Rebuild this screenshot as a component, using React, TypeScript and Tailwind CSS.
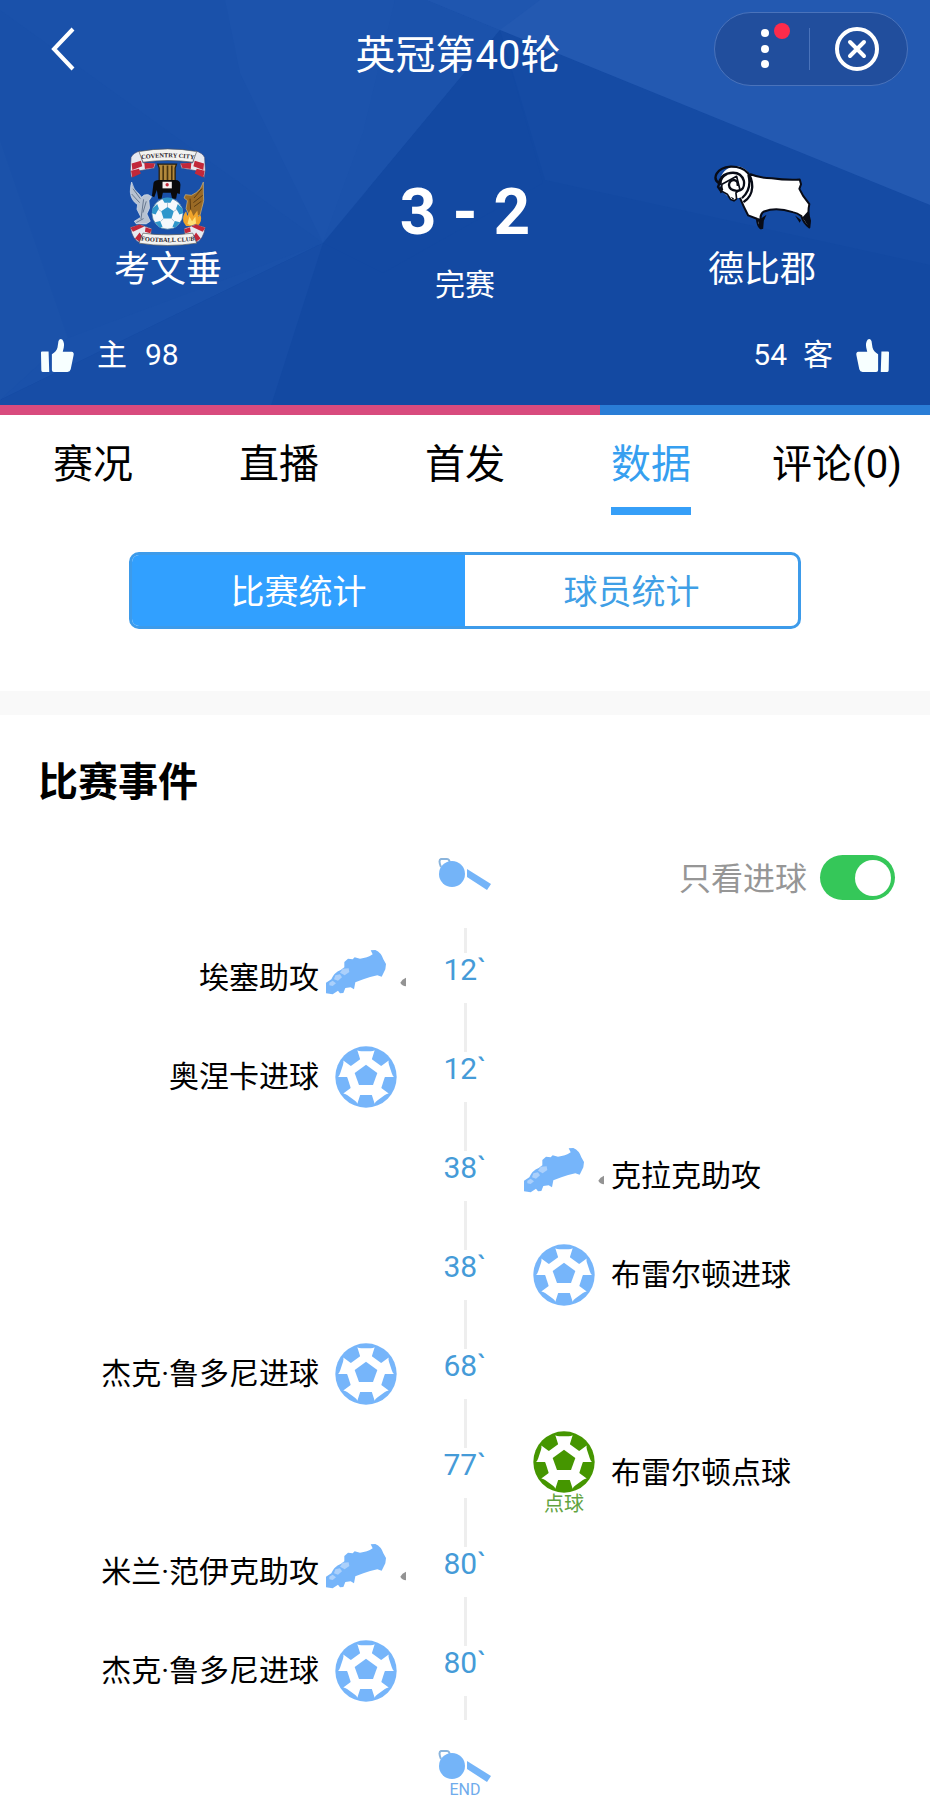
import { useState } from "react";
import type { ReactNode } from "react";

/* ================= TYPES ================= */

type EventKind = "assist" | "goal" | "penalty";

interface MatchEvent {
  minute: number;
  side: "home" | "away";
  kind: EventKind;
  text: string;
}

/* ================= DATA ================= */

const TABS = ["赛况", "直播", "首发", "数据", "评论(0)"];
const STATS = ["比赛统计", "球员统计"];
const LIKES = { home: 98, away: 54 };

const EVENTS: MatchEvent[] = [
  { minute: 12, side: "home", kind: "assist", text: "埃塞助攻" },
  { minute: 12, side: "home", kind: "goal", text: "奥涅卡进球" },
  { minute: 38, side: "away", kind: "assist", text: "克拉克助攻" },
  { minute: 38, side: "away", kind: "goal", text: "布雷尔顿进球" },
  { minute: 68, side: "home", kind: "goal", text: "杰克·鲁多尼进球" },
  { minute: 77, side: "away", kind: "penalty", text: "布雷尔顿点球" },
  { minute: 80, side: "home", kind: "assist", text: "米兰·范伊克助攻" },
  { minute: 80, side: "home", kind: "goal", text: "杰克·鲁多尼进球" },
];

/* ================= MAIN COMPONENT ================= */

export default function App() {
  const [tab, setTab] = useState("数据");
  const [stat, setStat] = useState("比赛统计");
  const [goalsOnly, setGoalsOnly] = useState(true);

  const homeShare = (LIKES.home / (LIKES.home + LIKES.away)) * 100;

  return (
    <div className="min-h-screen bg-white font-[Roboto,'Noto_Sans_CJK_SC',sans-serif] text-black">
      {/* HEADER */}
      <header className="relative isolate overflow-hidden bg-[#1349a2] text-white">
        <HeaderBackdrop />

        <div className="grid grid-cols-[1fr_auto_1fr] pt-3 pr-[14px]">
          <button type="button" aria-label="返回" className="ml-12 flex h-[74px] w-10 items-center">
            <svg viewBox="0 0 30 46" className="h-[46px] w-[30px]" fill="none" stroke="currentColor" strokeWidth="4">
              <path d="M25 3 6 23l19 20" />
            </svg>
          </button>
          <h1 className="pt-[14px] text-[40px] leading-[60px]">英冠第40轮</h1>
          <div className="mr-2 flex h-[74px] w-[194px] items-center justify-self-end rounded-full border border-[#4a73bb] bg-[#214e9d]">
            <button type="button" aria-label="更多" className="h-full w-[94px]">
              <svg viewBox="0 0 94 72" className="h-[72px] w-full" fill="currentColor">
                <circle cx="50" cy="20" r="4" />
                <circle cx="50" cy="36" r="4" />
                <circle cx="50" cy="51" r="4" />
                <circle cx="67" cy="18" r="8" fill="#fd2b4b" />
              </svg>
            </button>
            <span className="h-[42px] w-px bg-[#4a73bb]" />
            <button type="button" aria-label="关闭" className="flex h-full w-[94px] items-center justify-center">
              <svg viewBox="0 0 46 46" className="size-[46px]" fill="none" stroke="currentColor" strokeWidth="4">
                <circle cx="23" cy="23" r="20" />
                <path d="m16 16 14 14M30 16 16 30" strokeLinecap="round" />
              </svg>
            </button>
          </div>
        </div>

        <div className="mt-[61px] grid grid-cols-[13fr_10fr_13fr] text-center">
          <Team name="考文垂">
            <CoventryLogo />
          </Team>
          <div>
            <p className="pt-[34px] text-[64px] leading-[64px] font-bold">3 - 2</p>
            <p className="pt-5 text-[30px] leading-[40px]">完赛</p>
          </div>
          <Team name="德比郡">
            <DerbyLogo />
          </Team>
        </div>

        <div className="mt-[30px] mb-[30px] flex h-10 items-center justify-between px-10 text-[30px] leading-10">
          <button type="button" className="flex items-center">
            <Thumb />
            <span className="ml-[22px]">主</span>
            <span className="ml-[18px]">{LIKES.home}</span>
          </button>
          <button type="button" className="flex items-center">
            <span className="mr-[16px]">{LIKES.away}</span>
            <span className="mr-[22px]">客</span>
            <Thumb flip />
          </button>
        </div>

        <div className="flex h-[10px] bg-[#2a7dd6]">
          <div className="bg-[#d84b7e]" style={{ width: `${homeShare}%` }} />
        </div>
      </header>

      {/* TABS */}
      <nav className="grid grid-cols-5">
        {TABS.map((name) => (
          <button
            key={name}
            type="button"
            onClick={() => setTab(name)}
            className="flex justify-center pt-5 text-[40px] leading-[60px] whitespace-nowrap"
          >
            <span
              className={
                name === tab
                  ? "border-b-8 border-[#369ff8] pb-3 text-[#369ff0]"
                  : "border-b-8 border-transparent pb-3"
              }
            >
              {name}
            </span>
          </button>
        ))}
      </nav>

      {/* STATS SWITCH */}
      <div className="px-[129px] pt-[37px] pb-[62px]">
        <div className="grid h-[77px] grid-cols-2 overflow-hidden rounded-[10px] border-3 border-[#3d9bea] text-[34px]">
          {STATS.map((name) => (
            <button
              key={name}
              type="button"
              onClick={() => setStat(name)}
              className={name === stat ? "bg-[#31a0ff] pt-1 text-white" : "pt-1 text-[#3f9fe6]"}
            >
              {name}
            </button>
          ))}
        </div>
      </div>

      <div className="h-6 bg-[#f9f9f9]" />

      {/* EVENTS */}
      <section>
        <h2 className="pt-[38px] pl-[38px] text-[40px] leading-[60px] font-bold">比赛事件</h2>

        <div className="mt-[30px] grid h-[85px] grid-cols-[1fr_118px_1fr]">
          <div className="col-start-2 flex justify-center pt-[14px]">
            <Whistle />
          </div>
          <label className="mr-[35px] flex items-start justify-end gap-[13px] pt-3 text-[32px] leading-[49px] text-[#969696]">
            只看进球
            <input
              type="checkbox"
              checked={goalsOnly}
              onChange={(e) => setGoalsOnly(e.target.checked)}
              className="flex h-[45px] w-[75px] appearance-none items-center rounded-full bg-gray-300 px-1 before:size-9 before:rounded-full before:bg-white before:content-[''] checked:justify-end checked:bg-[#35c759]"
            />
          </label>
        </div>

        <ul>
          {EVENTS.map((event, i) => (
            <EventRow key={i} event={event} />
          ))}
        </ul>

        <div className="flex flex-col items-center pt-[29px] pb-4">
          <Whistle />
          <span className="-mt-1 text-[16px] leading-[18px] text-[#6fabec]">END</span>
        </div>
      </section>
    </div>
  );
}

/* ================= REUSABLE COMPONENTS ================= */

function Team({ name, children }: { name: string; children: ReactNode }) {
  return (
    <div className="flex flex-col items-center">
      <div className="flex h-[103px] items-start justify-center">
        <div className="flex h-[100px] items-center">{children}</div>
      </div>
      <p className="text-[36px] leading-[40px]">{name}</p>
    </div>
  );
}

function EventRow({ event }: { event: MatchEvent }) {
  const home = event.side === "home";

  return (
    <li className="grid h-[99px] grid-cols-[1fr_118px_1fr] items-center text-[30px] leading-[40px]">
      <div className="flex items-center justify-end gap-[7px]">
        {home && (
          <>
            <span>{event.text}</span>
            <EventIcon kind={event.kind} />
          </>
        )}
      </div>
      <div className="flex h-full flex-col items-center">
        <span className="w-[3px] flex-1 bg-[#eeeeee]" />
        <time className="h-[50px] leading-[34px] text-[#459bd8]">{event.minute}`</time>
        <span className="w-[3px] flex-1 bg-[#eeeeee]" />
      </div>
      <div className="flex items-center gap-[7px]">
        {!home && (
          <>
            <EventIcon kind={event.kind} />
            <span>{event.text}</span>
          </>
        )}
      </div>
    </li>
  );
}

function EventIcon({ kind }: { kind: EventKind }) {
  if (kind === "assist") return <Boot />;
  if (kind === "goal") {
    return (
      <span className="flex w-20 justify-center text-[#76b5fa]">
        <Ball />
      </span>
    );
  }
  return (
    <span className="flex w-20 flex-col items-center text-[#459600]">
      <Ball />
      <span className="text-[20px] leading-[22px] text-[#62a340]">点球</span>
    </span>
  );
}

/* ================= DRAWINGS ================= */

function HeaderBackdrop() {
  return (
    <svg
      aria-hidden="true"
      viewBox="0 0 930 415"
      preserveAspectRatio="none"
      className="absolute inset-0 -z-10 h-full w-full"
    >
      <path fill="#1a51aa" d="M0 0h427l73 30-177 213L0 400z" />
      <path fill="#174da6" d="M323 243 0 400v15h268z" />
      <path fill="#1c53ac" d="M225 0h170l-35 245-37-2-83-170z" />
      <path fill="#1b52ab" d="M395 0h32l73 30-177 213 40-110z" />
      <path fill="#1950a9" d="M0 10 323 243 68 338 0 400z" />
      <path fill="#1b52aa" d="M0 140 68 338 0 400z" />
      <path fill="#1349a2" d="M500 30 323 243l60 30 160-90z" />
      <path fill="#154ba4" d="m500 30 430 175v60L545 180z" />
      <path fill="#2359b1" d="M427 0h503v205L500 30z" />
      <path fill="#1f56af" d="M427 0h113l-40 30z" />
    </svg>
  );
}

function Thumb({ flip }: { flip?: boolean }) {
  return (
    <svg viewBox="120 55 106 106" className={flip ? "size-[35px] -scale-x-100" : "size-[35px]"} fill="#f7ffff">
      <path d="M123 99q0-3 3-3h20l2 62h-20q-4 0-4-5z" />
      <path d="M156 104q14-8 17-20l3-20q4-9 12-4 7 10 4 24l-3 13h27q7 1 6 9l-9 44q-2 8-10 8h-41q-6 0-6-6z" />
    </svg>
  );
}

function Whistle() {
  return (
    <svg viewBox="0 0 54 36" className="h-9 w-[54px]" fill="#74b4f8">
      <path d="M3 10Q0 3 3 2h6q3 0 3 6" fill="none" stroke="#8ab4dc" strokeWidth="2" />
      <circle cx="14" cy="17" r="13" />
      <path d="m29 12 24 15-4 6-20-13z" />
    </svg>
  );
}

function Boot() {
  return (
    <svg viewBox="18 -12 240 240" className="size-20 shrink-0">
      <path
        fill="#76b5fa"
        d="M18 122 34 112Q42 92 62 84L73 76V60L84 50 98 52 104 46 120 50Q142 48 158 37L152 25 166 24Q184 32 190 52L198 66 196 82 185 104 172 100Q150 104 130 112L106 121 102 142 92 136 76 138 70 153 60 154 54 146 38 157 18 154Z"
      />
      <path
        fill="#abd0fb"
        d="M68 80 86 79 88 90 74 100 60 92ZM46 100 60 97 66 106 54 116 42 112ZM28 122 38 116 48 124 38 132 28 130Z"
      />
      <path fill="#939393" d="M241 122Q246 111 258 107V133Q246 132 241 122Z" />
    </svg>
  );
}

function Ball() {
  return (
    <svg viewBox="-93 -93 186 186" className="size-[62px] shrink-0">
      <circle r="92" fill="currentColor" />
      <path fill="#fff" d="m0-66 63 46-24 74h-78l-24-74z" />
      {[0, 72, 144, 216, 288].map((deg) => (
        <path
          key={deg}
          fill="#fff"
          transform={`rotate(${deg})`}
          d="M-26-80q4 3 12 3h28q8 0 12-3l-8 25v20h-36v-20z"
        />
      ))}
      <path fill="currentColor" d="m0-37 34 25-13 36h-42l-13-36z" />
    </svg>
  );
}

function CoventryLogo() {
  return (
    <svg viewBox="62 62 232 294" className="h-[98px] w-[77px]">
      {/* top ribbon */}
      <path fill="#e7e9f0" stroke="#3d4470" strokeWidth="2" d="M68 90q6-14 28-20l8 36 38 2-4 14-44 8-25 20-3-22zM290 90q-6-14-28-20l-8 36-38 2 4 14 44 8 25 20 3-22z" />
      <path fill="#c2283a" d="M70 108l28-8 4 16-30 12zM288 108l-28-8-4 16 30 12zM108 106l32 2-4 13-26 4zM250 106l-32 2 4 13 26 4zM68 130l24-6 6 14-26 12zM290 130l-24-6-6 14 26 12z" />
      <path fill="#f3f3f1" stroke="#555" strokeWidth="2" d="M92 72q86-16 174 0l-12 32q-74-10-150 0z" />
      <path id="coventry-top" fill="none" d="M103 95q76-11 152 0" />
      <text fontSize="19" fontWeight="700" fill="#29222b" fontFamily="Liberation Serif, serif" textAnchor="middle">
        <textPath href="#coventry-top" startOffset="50%">COVENTRY CITY</textPath>
      </text>
      {/* castle and elephant */}
      <path fill="#b4893c" stroke="#2b2110" strokeWidth="4" d="M149 110h56l-4 12v40h-48v-40z" />
      <path stroke="#4b3510" strokeWidth="5" d="M165 114v46M178 114v46M191 114v46" />
      <path fill="#0a0a0c" d="M136 166q4-9 18-8h48q14 0 15 14l-2 28-8-2-3 16h-12l-4-18h-24l-4 18h-10l-4-26-8 22-7-4z" />
      <path fill="#f4eeee" d="M163 163h28v20h-28z" />
      <circle cx="177" cy="172" r="5" fill="#c2283a" />
      {/* griffin */}
      <path fill="#b8c3d2" stroke="#dce4ee" strokeWidth="2" d="M70 164q5 24 22 36l8 10q6-10 20-8l10 6-8 12 2 22-8 18 10 22-12 8H84l-6-8 20-12-12-24 2-14q-20-12-22-38 0-18 4-30z" />
      <path fill="none" stroke="#68788f" strokeWidth="3" d="m74 184 22 30M70 200l24 26M106 216l-8 60M114 222l-10 34M84 286l22-12" />
      {/* phoenix */}
      <path fill="#9a6a25" stroke="#d8b878" strokeWidth="2" d="M286 164q-6 22-22 32l-14 8-18-2-4 10 10 8-4 24 12 26 30-6 6-24q8-18 4-46z" />
      <path fill="none" stroke="#5b3b12" strokeWidth="3" d="m282 184-24 28M284 204l-28 22M280 222l-22 16M246 214l2 40" />
      <path fill="#f0a52b" d="M226 284q-4-20 8-32l4 14 10-20 8 20 12-16 2 18 8-4q6 20-10 32h-34z" />
      <path fill="#ffe176" d="M238 290l6-22 8 14 10-14 2 20-10 8z" />
      {/* football */}
      <circle cx="178" cy="259" r="47" fill="#f5f9fc" stroke="#31698f" strokeWidth="2" />
      <path fill="#2f97cb" d="m178 239 19 13-7 22h-24l-7-22zM162 214q16-7 32 0l-7 12h-18zM133 244l14-14 5 14-10 18-11-4zM223 244l-14-14-5 14 10 18 11-4zM140 285l16-4 7 18-8 3zM216 285l-16-4-7 18 8 3z" />
      <path fill="none" stroke="#8aa9bd" strokeWidth="2" d="M178 239v-14M197 252l10-6M190 274l9 9M166 274l-9 9M159 252l-10-6" />
      {/* bottom ribbon */}
      <path fill="#e7e9f0" stroke="#3d4470" strokeWidth="2" d="M66 300l30-8 34 12-2 20-32 2-2 20q-22-8-28-46zM292 300l-30-8-34 12 2 20 32 2 2 20q22-8 28-46z" />
      <path fill="#c2283a" d="M66 302l28-10 14 6-34 16zM292 302l-28-10-14 6 34 16zM80 334l14-18 6 10-6 18zM278 334l-14-18-6 10 6 18zM112 300l18 6-4 12-16-4zM246 300l-18 6 4 12 16-4z" />
      <path fill="#f3f3f1" stroke="#555" strokeWidth="2" d="M104 318q74 10 150 0l12 30q-88 14-174 0z" />
      <path id="coventry-bottom" fill="none" d="M98 340q80 10 162 0" />
      <text fontSize="19" fontWeight="700" fill="#29222b" fontFamily="Liberation Serif, serif" textAnchor="middle">
        <textPath href="#coventry-bottom" startOffset="50%">FOOTBALL CLUB</textPath>
      </text>
    </svg>
  );
}

function DerbyLogo() {
  return (
    <svg viewBox="68 78 292 200" className="h-[67px] w-[97px]" strokeLinejoin="round">
      <path
        fill="#fff"
        stroke="#080b16"
        strokeWidth="6"
        d="M178 108q30 12 64 12 40 6 84 4l4 14-5 14 12 22 18 24q-6 26 2 50l-2 20q-18-14-24-34-12-10-26-12-50-16-86-2-14 8-10 28l-2 22q-8-6-10-28l-26-10q-14-26-26-56z"
      />
      <path fill="#080b16" d="M168 232l30 8 6 22 4 12 8-2 2-24 8-18-18 12zM312 232l14 22 4-8zM334 238l22 32 2-22-8-28z" />
      <circle cx="134" cy="132" r="48" fill="#fff" />
      <path fill="#fff" stroke="#080b16" strokeWidth="5" d="M92 138l-2 20 18 10 10 16 10 4 8-6-2-18 12-10-10-40z" />
      <path
        fill="none"
        stroke="#080b16"
        strokeWidth="7"
        strokeLinecap="round"
        d="M84 136q-18-12-8-30 10-18 42-21 34-1 52 19 14 16 13 44-2 28-24 42M84 136q2-24 24-30 40-10 50 22 4 30-22 30-22-2-23-18 2-16 18-14 10 4 8 14M84 136l-4 10 10 14M106 108q-20 10-18 30M172 112q10 40-18 66"
      />
      <path fill="#080b16" d="m90 140 6 14-8 12-4-14zM118 176l10 4-2 6z" />
    </svg>
  );
}
